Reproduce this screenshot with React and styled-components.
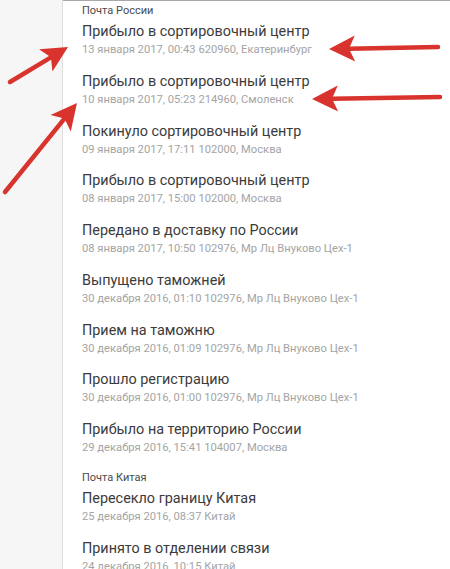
import React from "react"
import styled, { createGlobalStyle } from "styled-components"

const Global = createGlobalStyle`
  html, body {
    margin: 0;
    padding: 0;
    background: #ffffff;
  }
  body {
    font-family: Roboto, "Liberation Sans", sans-serif;
  }
`

const Page = styled.div`
  position: relative;
  width: 450px;
  height: 569px;
  overflow: hidden;
  display: flex;
`

const Side = styled.div`
  width: 62px;
  flex-shrink: 0;
  background: #f6f6f6;
  border-right: 1px solid #dedede;
`

const Main = styled.div`
  flex: 1;
  border-top: 1px solid #a9a9a9;
  padding: 2px 0 0 19px;
`

const Section = styled.div`
  margin-bottom: 11px;
`

const SectionTitle = styled.div`
  font-size: 11px;
  line-height: 16px;
  color: #4a4a4a;
  margin-bottom: 3px;
`

const Row = styled.div`
  margin-bottom: 13.75px;
`

const Title = styled.div`
  font-size: 14.4px;
  line-height: 20px;
  color: #3b3b3b;
`

const Meta = styled.div`
  font-size: 11.2px;
  line-height: 16px;
  color: #a4a4a4;
`

const Overlay = styled.svg`
  position: absolute;
  left: 0;
  top: 0;
  pointer-events: none;
`

const sections = [
  {
    name: "Почта России",
    rows: [
      ["Прибыло в сортировочный центр", "13 января 2017, 00:43 620960, Екатеринбург"],
      ["Прибыло в сортировочный центр", "10 января 2017, 05:23 214960, Смоленск"],
      ["Покинуло сортировочный центр", "09 января 2017, 17:11 102000, Москва"],
      ["Прибыло в сортировочный центр", "08 января 2017, 15:00 102000, Москва"],
      ["Передано в доставку по России", "08 января 2017, 10:50 102976, Мр Лц Внуково Цех-1"],
      ["Выпущено таможней", "30 декабря 2016, 01:10 102976, Мр Лц Внуково Цех-1"],
      ["Прием на таможню", "30 декабря 2016, 01:09 102976, Мр Лц Внуково Цех-1"],
      ["Прошло регистрацию", "30 декабря 2016, 01:00 102976, Мр Лц Внуково Цех-1"],
      ["Прибыло на территорию России", "29 декабря 2016, 15:41 104007, Москва"],
    ],
  },
  {
    name: "Почта Китая",
    rows: [
      ["Пересекло границу Китая", "25 декабря 2016, 08:37 Китай"],
      ["Принято в отделении связи", "24 декабря 2016, 10:15 Китай"],
    ],
  },
]

const arrows = [
  [10, 82, 68, 47],
  [5, 192, 77, 103],
  [438, 47, 329, 49],
  [440, 97, 312, 99],
]

function Arrow({ x1, y1, x2, y2 }) {
  const dx = x2 - x1
  const dy = y2 - y1
  const len = Math.hypot(dx, dy)
  const ux = dx / len
  const uy = dy / len
  const px = -uy
  const py = ux
  const headLen = 26
  const half = 13
  const bx = x2 - ux * headLen
  const by = y2 - uy * headLen
  const nx = x2 - ux * (headLen - 6)
  const ny = y2 - uy * (headLen - 6)
  const pts = [
    [x2, y2],
    [bx + px * half, by + py * half],
    [nx, ny],
    [bx - px * half, by - py * half],
  ]
  return (
    <g>
      <line x1={x1} y1={y1} x2={nx} y2={ny} stroke="#d8332c" strokeWidth="4.5" strokeLinecap="round" />
      <polygon points={pts.map(p => p.join(",")).join(" ")} fill="#d8332c" />
    </g>
  )
}

export default function App() {
  return (
    <Page>
      <Global />
      <Side />
      <Main>
        {sections.map(s => (
          <Section key={s.name}>
            <SectionTitle>{s.name}</SectionTitle>
            {s.rows.map((r, i) => (
              <Row key={i}>
                <Title>{r[0]}</Title>
                <Meta>{r[1]}</Meta>
              </Row>
            ))}
          </Section>
        ))}
      </Main>
      <Overlay width="450" height="569">
        {arrows.map((a, i) => (
          <Arrow key={i} x1={a[0]} y1={a[1]} x2={a[2]} y2={a[3]} />
        ))}
      </Overlay>
    </Page>
  )
}
